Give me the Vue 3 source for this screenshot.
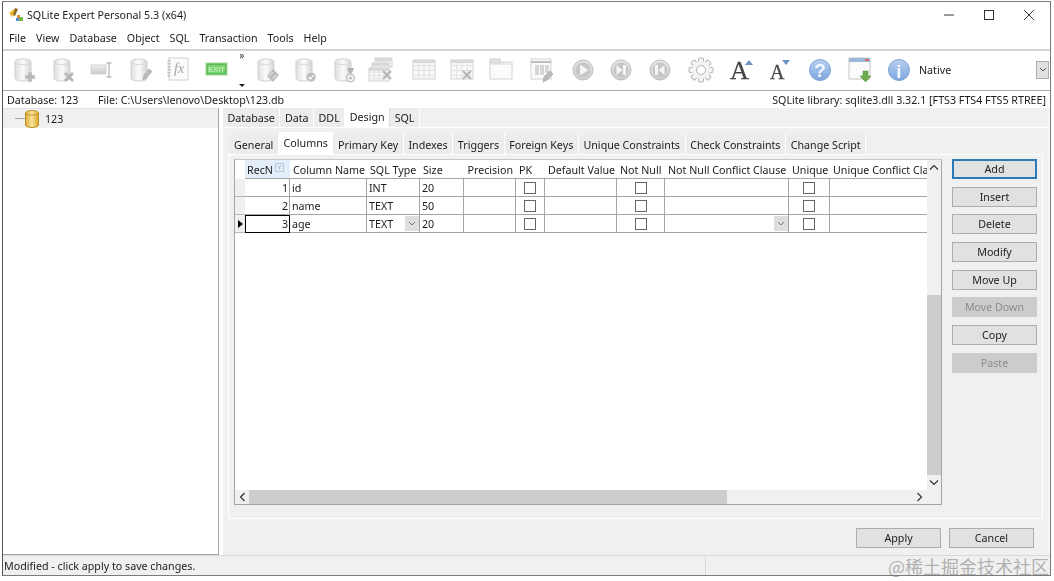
<script setup>
const cyl = (extra = '') => `<path d="M4 5c0-2 3.500-3 8-3s8 1 8 3v16c0 2-3.500 3-8 3s-8-1-8-3z" fill="url(#dbg)" stroke="#cfcfcf"/><path d="M4.500 5c0 1.600 3.300 2.600 7.500 2.600s7.500-1 7.500-2.600" fill="none" stroke="#d8d8d8"/>${extra}`
const tableLines = (x, y, w, h) => {
  let s = `<rect x="${x}" y="${y}" width="${w}" height="${h}" fill="#f8f8f8" stroke="#d2d2d2"/><rect x="${x}" y="${y}" width="${w}" height="3" fill="#d8d8d8"/>`
  for (let i = 1; i < 4; i++) s += `<path d="M${x} ${y + (h * i) / 4 + 1}h${w}" stroke="#e2e2e2"/>`
  for (let i = 1; i < 4; i++) s += `<path d="M${x + (w * i) / 4} ${y + 3}v${h - 3}" stroke="#e2e2e2"/>`
  return s
}
const xMark = (x, y, c = '#b5b5b5', w = 2.6) => `<path d="M${x - 4} ${y - 4}l8 8M${x + 4} ${y - 4}l-8 8" stroke="${c}" stroke-width="${w}" fill="none"/>`
const round = inner => `<circle cx="13" cy="13" r="10" fill="url(#rg)" stroke="#bdbdbd"/><circle cx="13" cy="13" r="7.500" fill="#c6c6c6"/>${inner}`
const blue = inner => `<circle cx="13" cy="13" r="10.500" fill="url(#bg)" stroke="#7da3d6"/>${inner}`
const gear = () => {
  let teeth = ''
  for (let i = 0; i < 8; i++) teeth += `<rect x="10.500" y="1" width="5" height="5" rx="1" transform="rotate(${i * 45} 13 13)" fill="#f4f4f4" stroke="#b4b4b4"/>`
  return `${teeth}<circle cx="13" cy="13" r="8.500" fill="#f4f4f4" stroke="#f4f4f4"/><circle cx="13" cy="13" r="4.500" fill="#fff" stroke="#b4b4b4"/>`
}

const tools = [
  { svg: cyl('<path d="M17 15h4v3h3v4h-3v3h-4v-3h-3v-4h3z" fill="#b8b8b8" stroke="#e8e8e8" stroke-width=".5"/>') },
  { svg: cyl(xMark(19, 20)) },
  { svg: '<rect x="3" y="8" width="15" height="9" fill="url(#barg)" stroke="#d4d4d4"/><path d="M18.500 6h5M18.500 20h5M21 6v14" stroke="#bcbcbc" stroke-width="1.300" fill="none"/>' },
  { svg: cyl('<path d="M16 23l1-5 5-6 3 2.500-5 6z" fill="#bdbdbd" stroke="#9f9f9f" stroke-width=".6"/>') },
  { svg: '<rect x="4" y="1" width="19" height="22" fill="#fbfbfb" stroke="#cfcfcf"/><path d="M4 3v18" stroke="#bdbdbd" stroke-dasharray="1.500 1.500" stroke-width="3"/><text x="9" y="16" class="fx">fx</text>' },
  { svg: '<rect x="2" y="6" width="21" height="12" fill="#5fbb5a" stroke="#9fd89a"/><rect x="4" y="8" width="17" height="8" fill="#79d46f"/><text x="12.500" y="15" class="exit">EXIT</text>' },
  { chevron: true },
  { svg: cyl('<path d="M19 12l6 6-6 7-6-6z" fill="#bdbdbd"/><path d="M15 19l4-4M19 22l3-4" stroke="#eee"/>') },
  { svg: cyl('<circle cx="19" cy="20" r="5" fill="#bcbcbc" stroke="#eee"/><path d="M16.500 20l2 2 3-4" stroke="#fff" fill="none" stroke-width="1.200"/>') },
  { svg: cyl('<path d="M16 11h7l-2 5h-3z" fill="#b4b4b4"/><circle cx="19.500" cy="21" r="4" fill="#f2f2f2" stroke="#b0b0b0"/><circle cx="19.500" cy="21" r="1.500" fill="#bdbdbd"/>') },
  { svg: tableLines(6, 1, 17, 9) + tableLines(3, 6, 17, 9) + tableLines(0, 11, 20, 13) + xMark(18, 18, '#b4b4b4', 2) },
  { m: 'sep', svg: tableLines(2, 3, 22, 19) },
  { svg: tableLines(2, 3, 22, 19) + xMark(18, 18, '#b4b4b4', 2) },
  { svg: '<rect x="2" y="5" width="22" height="17" fill="#fbfbfb" stroke="#d2d2d2"/><rect x="2" y="2" width="10" height="4" fill="#e2e2e2" stroke="#d2d2d2"/><path d="M2 7h22" stroke="#d8d8d8"/>' },
  { m: 'sep', svg: '<rect x="2" y="2" width="20" height="20" fill="#fafafa" stroke="#d2d2d2"/><path d="M2 5h20" stroke="#bdbdbd" stroke-width="2"/><path d="M6 8h4v10H6zM11 8h4v10h-4zM16 8h4v8h-4z" fill="#d6d6d6"/><path d="M14 25l1-5 6-6 3 3-6 6z" fill="#bbb" stroke="#999" stroke-width=".6"/>' },
  { m: 'sep2', svg: round('<path d="M10 7.500l8.500 5.500-8.500 5.500z" fill="#f4f4f4"/>') },
  { svg: round('<path d="M8.500 8l6 5-6 5z" fill="#f4f4f4"/><rect x="15" y="8" width="3" height="10" fill="#f4f4f4"/>') },
  { svg: round('<path d="M17.500 8l-6 5 6 5z" fill="#f4f4f4"/><rect x="8" y="8" width="3" height="10" fill="#f4f4f4"/>') },
  { m: 'sep', svg: gear() },
  { svg: '<text x="3" y="22" class="big-a">A</text><path d="M18 8l4-5 4 5z" fill="#6f92c4"/>' },
  { svg: '<text x="5" y="22" class="small-a">A</text><path d="M17 3h8l-4 5z" fill="#6f92c4"/>' },
  { m: 'sep', svg: blue('<text x="13" y="20" class="mark">?</text>') },
  { m: 'sep2', svg: '<rect x="2" y="1" width="21" height="21" fill="#fbfbfb" stroke="#c6c6c6"/><rect x="2" y="1" width="21" height="4" fill="#9cb7dc"/><rect x="18" y="2" width="4" height="2" fill="#d66"/><path d="M16 14h5v5h3l-5.500 6-5.500-6h3z" fill="#6dab4e" stroke="#4e8f37" stroke-width=".5"/>' },
  { svg: blue('<text x="13" y="20.500" class="mark">i</text>') },
]

const menus = ['File', 'View', 'Database', 'Object', 'SQL', 'Transaction', 'Tools', 'Help']
const mainTabs = ['Database', 'Data', 'DDL', 'Design', 'SQL']
const subTabs = ['General', 'Columns', 'Primary Key', 'Indexes', 'Triggers', 'Foreign Keys', 'Unique Constraints', 'Check Constraints', 'Change Script']
const headers = [
  { t: 'Column Name' }, { t: 'SQL Type' }, { t: 'Size' }, { t: 'Precision', right: true }, { t: 'PK' },
  { t: 'Default Value' }, { t: 'Not Null' }, { t: 'Not Null Conflict Clause' }, { t: 'Unique' }, { t: 'Unique Conflict Clause' },
]
const rows = [
  { no: 1, name: 'id', type: 'INT', size: '20' },
  { no: 2, name: 'name', type: 'TEXT', size: '50' },
  { no: 3, name: 'age', type: 'TEXT', size: '20', current: true },
]
const actions = [
  { t: 'Add', primary: true }, { t: 'Insert' }, { t: 'Delete' }, { t: 'Modify' }, { t: 'Move Up' },
  { t: 'Move Down', off: true }, { t: 'Copy' }, { t: 'Paste', off: true },
]
</script>

<template>
  <div class="page">
    <svg class="defs" width="0" height="0" aria-hidden="true">
      <defs>
        <linearGradient id="dbg" x1="0" x2="1" y1="0" y2="0"><stop offset="0" stop-color="#dedede"/><stop offset=".5" stop-color="#fbfbfb"/><stop offset="1" stop-color="#d4d4d4"/></linearGradient>
        <linearGradient id="barg" x1="0" x2="0" y1="0" y2="1"><stop offset="0" stop-color="#efefef"/><stop offset="1" stop-color="#c9c9c9"/></linearGradient>
        <linearGradient id="rg" x1="0" x2="0" y1="0" y2="1"><stop offset="0" stop-color="#e6e6e6"/><stop offset="1" stop-color="#cfcfcf"/></linearGradient>
        <linearGradient id="bg" x1="0" x2="0" y1="0" y2="1"><stop offset="0" stop-color="#b9d0f0"/><stop offset="1" stop-color="#7ea6de"/></linearGradient>
        <linearGradient id="gold" x1="0" x2="1" y1="0" y2="0"><stop offset="0" stop-color="#d9ae3c"/><stop offset=".5" stop-color="#fbe39a"/><stop offset="1" stop-color="#d8a52c"/></linearGradient>
      </defs>
    </svg>
    <div class="window">
      <header class="titlebar">
        <svg class="app-icon" width="16" height="16" viewBox="0 0 16 16">
          <path d="M1 6l5-4 2 2-4 6z" fill="#efb72f"/>
          <path d="M7 1l3 1-3 7-2-1z" fill="#8a6a2a"/>
          <path d="M9 8h3v3H9z" fill="#e9842b"/>
          <path d="M8 11h3v3H8z" fill="#4d8fd6"/>
          <path d="M11 10h4v4h-4z" fill="#7cb545"/>
        </svg>
        <span class="title">SQLite Expert Personal 5.3 (x64)</span>
        <div class="controls">
          <svg width="12" height="12" viewBox="0 0 12 12"><path d="M1 6h10" stroke="#333" fill="none"/></svg>
          <svg width="12" height="12" viewBox="0 0 12 12"><rect x="1.500" y="1.500" width="9" height="9" stroke="#333" fill="none"/></svg>
          <svg width="12" height="12" viewBox="0 0 12 12"><path d="M1 1l10 10M11 1L1 11" stroke="#333" fill="none"/></svg>
        </div>
      </header>
      <nav class="menubar"><span v-for="m in menus" :key="m">{{ m }}</span></nav>
      <div class="toolbar">
        <template v-for="(tool, i) in tools" :key="i">
          <div v-if="tool.chevron" class="chevrons">
            <span class="more">»</span>
            <span class="down"></span>
          </div>
          <div v-else class="tool" :class="tool.m">
            <svg width="26" height="26" viewBox="0 0 26 26" v-html="tool.svg"></svg>
          </div>
        </template>
        <span class="native">Native</span>
        <span class="native-drop">
          <svg width="8" height="6" viewBox="0 0 8 6"><path d="M1 1l3 3 3-3" stroke="#555" fill="none"/></svg>
        </span>
      </div>
      <div class="infobar">
        <span class="info-db">Database: 123</span>
        <span>File: C:\Users\lenovo\Desktop\123.db</span>
        <span class="info-lib">SQLite library: sqlite3.dll 3.32.1 [FTS3 FTS4 FTS5 RTREE]</span>
      </div>
      <main class="main">
        <aside class="tree">
          <div class="tree-row">
            <span class="tree-line"></span>
            <svg width="14" height="18" viewBox="0 0 14 18">
              <path d="M.5 3c0-1.500 3-2.500 6.500-2.500S13.500 1.500 13.500 3v12c0 1.500-3 2.500-6.500 2.500S.5 16.500.5 15z" fill="url(#gold)" stroke="#b98e22"/>
              <path d="M1 3.500c1 1 3 1.600 6 1.600s5-.6 6-1.600" stroke="#c79a2a" fill="none"/>
            </svg>
            <span class="tree-label">123</span>
          </div>
        </aside>
        <section class="right">
          <div class="tabs">
            <span v-for="t in mainTabs" :key="t" class="tab" :class="{ active: t === 'Design' }">{{ t }}</span>
          </div>
          <div class="tab-body">
            <div class="subtabs">
              <span v-for="t in subTabs" :key="t" class="subtab" :class="{ active: t === 'Columns' }">{{ t }}</span>
            </div>
            <div class="subpage">
              <div class="grid-box">
                <div class="table">
                  <div class="row head">
                    <div class="ind"></div>
                    <div class="hcell recno">RecN<span class="filter">Y</span></div>
                    <div v-for="h in headers" :key="h.t" class="hcell" :class="{ 'to-right': h.right }">{{ h.t }}</div>
                  </div>
                  <div v-for="r in rows" :key="r.no" class="row">
                    <div class="ind"><span v-if="r.current" class="arrow"></span></div>
                    <div class="cell no" :class="{ current: r.current }">{{ r.no }}</div>
                    <div class="cell">{{ r.name }}</div>
                    <div class="cell">{{ r.type }}<span v-if="r.current" class="combo"><svg width="8" height="6" viewBox="0 0 8 6"><path d="M1 1l3 3 3-3" stroke="#777" fill="none"/></svg></span></div>
                    <div class="cell">{{ r.size }}</div>
                    <div class="cell"></div>
                    <div class="cell check"><i></i></div>
                    <div class="cell"></div>
                    <div class="cell check"><i></i></div>
                    <div class="cell"><span v-if="r.current" class="combo"><svg width="8" height="6" viewBox="0 0 8 6"><path d="M1 1l3 3 3-3" stroke="#777" fill="none"/></svg></span></div>
                    <div class="cell check"><i></i></div>
                    <div class="cell last"></div>
                  </div>
                </div>
                <div class="vscroll">
                  <svg width="10" height="7" viewBox="0 0 10 7"><path d="M1 5.500l4-4 4 4" stroke="#333" stroke-width="1.200" fill="none"/></svg>
                  <div class="vtrack"><div class="vthumb"></div></div>
                  <svg width="10" height="7" viewBox="0 0 10 7"><path d="M1 1.500l4 4 4-4" stroke="#333" stroke-width="1.200" fill="none"/></svg>
                </div>
                <div class="hscroll">
                  <svg width="7" height="10" viewBox="0 0 7 10"><path d="M5.500 1l-4 4 4 4" stroke="#333" stroke-width="1.200" fill="none"/></svg>
                  <div class="htrack"><div class="hthumb"></div></div>
                  <svg width="7" height="10" viewBox="0 0 7 10"><path d="M1.500 1l4 4-4 4" stroke="#333" stroke-width="1.200" fill="none"/></svg>
                </div>
                <div class="corner"></div>
              </div>
              <div class="actions">
                <button v-for="a in actions" :key="a.t" class="btn" :class="{ primary: a.primary, off: a.off }">{{ a.t }}</button>
              </div>
            </div>
            <div class="footer">
              <button class="btn">Apply</button>
              <button class="btn">Cancel</button>
            </div>
          </div>
        </section>
      </main>
      <footer class="status">
        <span class="status-text">Modified - click apply to save changes.</span>
        <span class="status-split"></span>
      </footer>
    </div>
    <span class="watermark">@稀土掘金技术社区</span>
  </div>
</template>

<style>
html, body { margin: 0; background: #fff; overflow: hidden; }
</style>

<style scoped>
.page {
  position: relative;
  width: 1054px;
  height: 581px;
  box-sizing: border-box;
  padding: 1px 3px 5px 2px;
  background: #fff;
  font-family: "Noto Sans", "Open Sans", sans-serif;
  font-size: 10.7px;
  color: #1c1c1c;
  overflow: hidden;
}
.defs { position: absolute; }
.window {
  height: 100%;
  box-sizing: border-box;
  border: 1px solid #7a7a7a;
  border-left-color: #555;
  display: flex;
  flex-direction: column;
  background: #fff;
  filter: blur(0.3px);
}
.titlebar {
  height: 26px;
  flex: none;
  display: flex;
  align-items: center;
  padding-left: 5px;
  gap: 1px;
}
.app-icon { flex: none; }
.title { margin-left: 2px; }
.controls {
  margin-left: auto;
  display: flex;
  gap: 28px;
  padding-right: 15px;
}
.menubar {
  height: 20px;
  margin-bottom: 1px;
  flex: none;
  display: flex;
  align-items: center;
  padding-left: 6px;
  gap: 10px;
}
.toolbar {
  height: 42px;
  flex: none;
  box-sizing: border-box;
  border-top: 2px solid #d4d4d4;
  border-bottom: 1px solid #a8a8a8;
  display: flex;
  align-items: center;
  padding: 0 0 2px 2px;
}
.tool {
  width: 38.5px;
  flex: none;
  display: flex;
  justify-content: center;
}
.tool.sep { margin-left: 3px; }
.tool.sep2 { margin-left: 2px; }
.tool svg { overflow: visible; }
.chevrons {
  width: 11.5px;
  height: 100%;
  flex: none;
  display: flex;
  flex-direction: column;
  align-items: center;
  justify-content: space-between;
  padding: 0 0 1px;
  box-sizing: border-box;
}
.more { font-size: 10px; line-height: 9px; color: #333; }
.down {
  width: 0;
  height: 0;
  border-left: 3px solid transparent;
  border-right: 3px solid transparent;
  border-top: 3px solid #222;
}
.native { margin-left: 1px; }
.native-drop {
  margin-left: auto;
  margin-right: 1px;
  width: 11px;
  height: 16px;
  background: #e1e1e1;
  border: 1px solid #adadad;
  display: flex;
  align-items: center;
  justify-content: center;
}
.tool :deep(.fx) { font: italic 14px "Liberation Serif", serif; fill: #a4a4a4; }
.tool :deep(.exit) { font: 7.5px "Liberation Sans", sans-serif; fill: #d6f5d0; text-anchor: middle; }
.tool :deep(.big-a) { font: 26px "Liberation Serif", serif; fill: #444; stroke: #444; stroke-width: .3px; }
.tool :deep(.small-a) { font: 20px "Liberation Serif", serif; fill: #444; stroke: #444; stroke-width: .3px; }
.tool :deep(.mark) { font: bold 19px "Liberation Sans", sans-serif; fill: #f6f9ff; text-anchor: middle; }
.infobar {
  height: 17px;
  flex: none;
  display: flex;
  align-items: center;
  padding: 0 4px 0 4px;
}
.info-db { width: 91px; }
.info-lib { margin-left: auto; }
.main {
  flex: 1;
  min-height: 0;
  display: flex;
  gap: 4px;
  padding-right: 1px;
}
.tree {
  width: 216px;
  flex: none;
  box-sizing: border-box;
  border-right: 1px solid #a5a5a5;
  border-bottom: 1px solid #a5a5a5;
  border-top: 1px solid #e2e2e2;
}
.tree-row {
  height: 19px;
  background: #f0f0f0;
  display: flex;
  align-items: center;
  padding-left: 12px;
}
.tree-line { width: 10px; height: 1px; background: #a8a8a8; }
.tree-label { margin-left: 6px; }
.right {
  flex: 1;
  min-width: 0;
  display: flex;
  flex-direction: column;
  background: #f0f0f0;
}
.tabs {
  height: 19px;
  flex: none;
  display: flex;
  background: #f0f0f0;
  border-bottom: 1px solid #fff;
}
.tab {
  padding: 1px 4.500px 0;
  display: flex;
  align-items: center;
  background: #ececec;
  border-right: 1px solid #fff;
}
.tab.active {
  background: #fff;
  margin-top: -1px;
  padding-top: 0;
  border-right: 1px solid #ddd;
}
.tab-body {
  flex: 1;
  min-height: 0;
  display: flex;
  flex-direction: column;
  padding: 6px 6px 0 5px;
}
.subtabs {
  height: 20px;
  flex: none;
  display: flex;
  padding-left: 1.400px;
}
.subtab {
  padding: 2px 4.600px 0;
  display: flex;
  align-items: center;
  background: #ececec;
  border-right: 1px solid #fff;
}
.subtab.active {
  background: #fff;
  margin-top: -2px;
  padding-top: 0;
}
.subpage {
  height: 365px;
  flex: none;
  box-sizing: border-box;
  border: 1px solid #fff;
  background: #f0f0f0;
  display: flex;
  padding: 4px 4px 13px 5px;
  gap: 10px;
}
.grid-box {
  width: 708px;
  flex: none;
  box-sizing: border-box;
  border: 1px solid #a5a5a5;
  border-top-color: #c8c8c8;
  background: #fff;
  display: grid;
  grid-template-columns: 1fr 14px;
  grid-template-rows: 1fr 14px;
}
.table { overflow: hidden; min-width: 0; }
.row {
  display: grid;
  grid-template-columns: 10px 45px 77px 53px 44px 52px 29px 72px 48px 124px 41px 98px;
  height: 18px;
}
.row.head { height: 19px; }
.ind {
  background: #f0f0f0;
  border-bottom: 1px solid #bbb;
  display: flex;
  align-items: center;
  justify-content: center;
}
.head .ind { background: #fff; border-bottom-color: #fff; }
.arrow {
  width: 0;
  height: 0;
  border-top: 4px solid transparent;
  border-bottom: 4px solid transparent;
  border-left: 5px solid #000;
}
.hcell {
  display: flex;
  align-items: center;
  padding: 1px 0 0 3px;
  white-space: nowrap;
  overflow: hidden;
  border-bottom: 1px solid #a5a5a5;
}
.hcell.to-right { justify-content: flex-end; padding-right: 3px; }
.hcell.recno { background: #e4eef9; padding-left: 2px; }
.filter {
  width: 9px;
  height: 9px;
  margin: -5px 0 0 2px;
  border: 1px solid #b9c9dd;
  font-size: 7px;
  line-height: 7px;
  text-align: center;
  color: #9db0c8;
  box-sizing: border-box;
  flex: none;
}
.cell {
  position: relative;
  display: flex;
  align-items: center;
  padding-left: 2px;
  box-sizing: border-box;
  border-right: 1px solid #a5a5a5;
  border-bottom: 1px solid #a5a5a5;
}
.cell.last { border-right: none; }
.cell.no { justify-content: flex-end; padding-right: 1px; }
.cell.current { outline: 1px solid #000; outline-offset: -1px; }
.cell.check { justify-content: center; padding-left: 0; }
.cell.check i {
  width: 12px;
  height: 12px;
  box-sizing: border-box;
  border: 1px solid #666;
  background: #fff;
}
.combo {
  position: absolute;
  right: 0;
  top: 1px;
  bottom: 1px;
  width: 14px;
  background: #dedede;
  display: flex;
  align-items: center;
  justify-content: center;
}
.vscroll {
  background: #f0f0f0;
  display: flex;
  flex-direction: column;
  align-items: center;
  justify-content: space-between;
  padding: 4px 0;
}
.vtrack { flex: 1; align-self: stretch; display: flex; flex-direction: column; justify-content: flex-end; padding: 5px 0 4px; }
.vthumb { height: 180px; background: #cdcdcd; }
.hscroll {
  background: #f0f0f0;
  display: flex;
  align-items: center;
  padding: 0 4px;
}
.htrack { flex: 1; height: 100%; margin: 0 5px 0 3px; }
.hthumb { width: 478px; height: 100%; background: #cdcdcd; }
.corner { background: #f0f0f0; }
.actions {
  display: flex;
  flex-direction: column;
  gap: 7.700px;
}
.btn {
  width: 85px;
  height: 20px;
  flex: none;
  padding: 0;
  box-sizing: border-box;
  background: #e1e1e1;
  border: 1px solid #adadad;
  font: inherit;
  color: #1c1c1c;
}
.btn.primary { border: 2px solid #2a7ab8; }
.btn.off { background: #cccccc; border-color: #cccccc; color: #8c8c8c; }
.footer {
  flex: 1;
  display: flex;
  justify-content: flex-end;
  align-items: flex-start;
  gap: 8px;
  padding: 9px 9px 0 0;
}
.status {
  height: 20px;
  flex: none;
  background: #f0f0f0;
  border-top: 1px solid #d8d8d8;
  display: flex;
  align-items: center;
  box-sizing: border-box;
}
.status-text { padding-left: 1px; }
.status-split { margin-left: auto; margin-right: 344px; width: 1px; height: 100%; background: #d8d8d8; }
.watermark {
  position: absolute;
  left: 888px;
  top: 554px;
  font-family: "Noto Sans CJK SC", sans-serif;
  font-size: 18px;
  line-height: 24px;
  color: rgba(120, 120, 120, 0.55);
  white-space: nowrap;
}
</style>
